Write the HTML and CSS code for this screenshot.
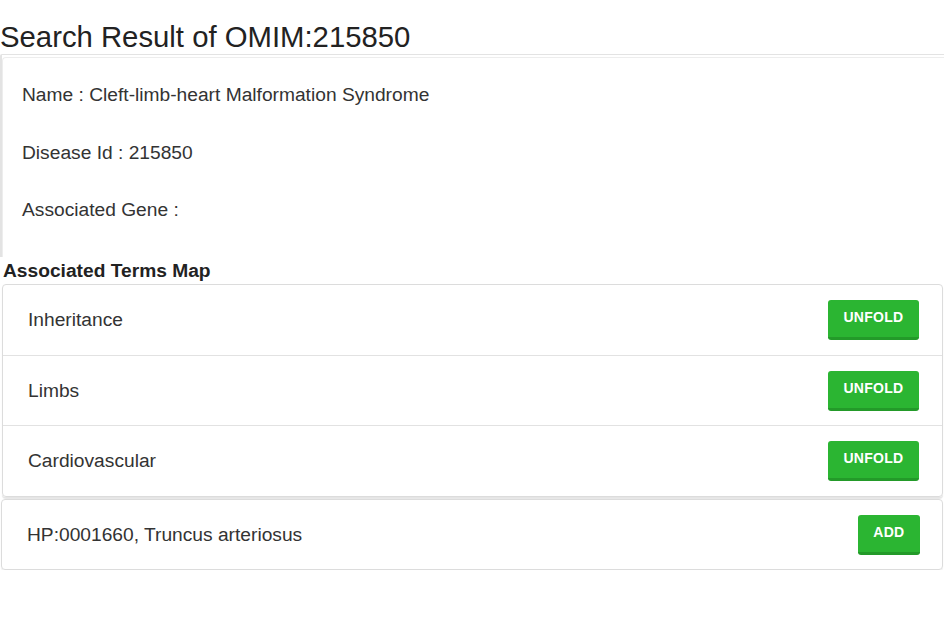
FILE: index.html
```html
<!DOCTYPE html>
<html>
<head>
<meta charset="utf-8">
<link rel="stylesheet" href="styles.css">
</head>
<body>
<h1 class="title">Search Result of OMIM:215850</h1>
<div class="panel">
  <div class="info-card">
    <p class="info">Name : Cleft-limb-heart Malformation Syndrome</p>
    <p class="info">Disease Id : 215850</p>
    <p class="info">Associated Gene :</p>
  </div>
</div>
<h2 class="section">Associated Terms Map</h2>
<div class="terms">
  <div class="term-row"><span class="term">Inheritance</span><button class="btn">UNFOLD</button></div>
  <div class="term-row"><span class="term">Limbs</span><button class="btn">UNFOLD</button></div>
  <div class="term-row"><span class="term">Cardiovascular</span><button class="btn">UNFOLD</button></div>
</div>
<div class="add-card">
  <span class="term">HP:0001660, Truncus arteriosus</span><button class="btn">ADD</button>
</div>
</body>
</html>
```
FILE: styles.css
```css
html, body {
  margin: 0;
  padding: 0;
  background: #fff;
}
body {
  font-family: "Liberation Sans", Arial, sans-serif;
  color: #333;
  width: 944px;
}
.title {
  margin: 20px 0 0 0;
  font-size: 29.3px;
  line-height: 33px;
  font-weight: normal;
  color: #222;
  height: 34px;
}
.panel {
  border-top: 1px solid #e3e3e3;
  border-left: 2px solid #e3e3e3;
  border-top-left-radius: 2px;
  padding-top: 2px;
}
.info-card {
  border-top: 1px solid #ededed;
  border-left: 1px solid #ededed;
  border-top-left-radius: 4px;
  padding: 26px 20px 36px 19px;
  display: flex;
  flex-direction: column;
  gap: 35.5px;
}
.info {
  margin: 0;
  font-size: 19.2px;
  line-height: 22px;
}
.section {
  margin: 3px 0 0 3px;
  font-size: 19.2px;
  line-height: 22px;
  font-weight: bold;
  color: #222;
}
.terms {
  margin: 2px 1px 0 2px;
  border: 1px solid #dcdcdc;
  border-radius: 4px;
  box-shadow: 0 2px 1px rgba(0,0,0,0.1);
}
.term-row {
  height: 70px;
  display: flex;
  align-items: center;
  justify-content: space-between;
  padding: 0 23px 0 25px;
  border-bottom: 1px solid #e2e2e2;
}
.term-row:nth-child(2) {
  height: 69px;
}
.term-row:last-child {
  border-bottom: none;
}
.term {
  font-size: 19.2px;
  line-height: 22px;
}
.btn {
  height: 40px;
  padding: 0 15.5px 3px 15.5px;
  border: none;
  border-bottom: 3px solid #239a29;
  border-radius: 3px;
  background: #2bb532;
  color: #fff;
  font-family: "Liberation Sans", Arial, sans-serif;
  font-size: 14px;
  font-weight: bold;
  letter-spacing: 0.3px;
}
.add-card {
  margin: 2px 1px 0 1px;
  height: 69px;
  display: flex;
  align-items: center;
  justify-content: space-between;
  padding: 0 22px 0 25px;
  border: 1px solid #dcdcdc;
  border-radius: 4px;
  box-shadow: 0 1px 1px rgba(0,0,0,0.08);
}
```
